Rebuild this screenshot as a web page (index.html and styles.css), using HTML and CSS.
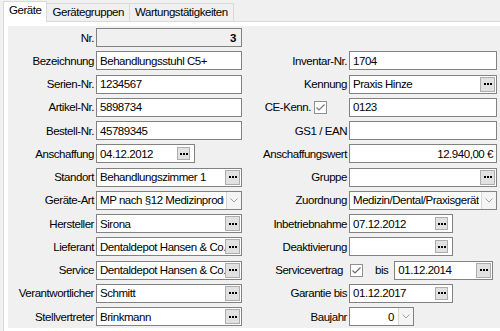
FILE: index.html
```html
<!DOCTYPE html>
<html>
  <head>
    <meta charset="utf-8" />
    <title>Geräte</title>
    <link rel="stylesheet" href="styles.css">
  </head>
  <body>
    <div class="tabs">
      <div class="tab active">Geräte</div>
      <div class="tab">Gerätegruppen</div>
      <div class="tab">Wartungstätigkeiten</div>
    </div>
    <div class="page">
      <div class="form">
        <div class="lbl">Nr.</div>
        <div class="box ro">3</div>
        <div class="blank"></div>

        <div class="lbl">Bezeichnung</div>
        <div class="box"><span class="v">Behandlungsstuhl C5+</span></div>
        <div class="lbl">Inventar-Nr.</div>
        <div class="box"><span class="v">1704</span></div>

        <div class="lbl">Serien-Nr.</div>
        <div class="box"><span class="v">1234567</span></div>
        <div class="lbl">Kennung</div>
        <div class="box"><span class="v">Praxis Hinze</span><span class="btn"><i></i><i></i><i></i></span></div>

        <div class="lbl">Artikel-Nr.</div>
        <div class="box"><span class="v">5898734</span></div>
        <div class="lbl ce">CE-Kenn.<span class="chk"><svg width="11" height="11" viewBox="0 0 11 11"><polyline points="1.5,5.5 4,8 9.5,2.5" fill="none" stroke="#7a7a7a" stroke-width="1.2"/></svg></span></div>
        <div class="box"><span class="v">0123</span></div>

        <div class="lbl">Bestell-Nr.</div>
        <div class="box"><span class="v">45789345</span></div>
        <div class="lbl">GS1 / EAN</div>
        <div class="box"><span class="v"></span></div>

        <div class="lbl">Anschaffung</div>
        <div class="cell"><div class="box date-l date"><span class="v">04.12.2012</span><span class="btn"><i></i><i></i><i></i></span></div></div>
        <div class="lbl">Anschaffungswert</div>
        <div class="box num"><span class="v">12.940,00 €</span></div>

        <div class="lbl">Standort</div>
        <div class="box"><span class="v">Behandlungszimmer 1</span><span class="btn"><i></i><i></i><i></i></span></div>
        <div class="lbl">Gruppe</div>
        <div class="box"><span class="v"></span><span class="btn"><i></i><i></i><i></i></span></div>

        <div class="lbl">Geräte-Art</div>
        <div class="box sel"><span class="v">MP nach §12 Medizinprodukteverordnung</span><span class="arr"><svg width="8" height="5" viewBox="0 0 8 5"><polyline points="0.5,0.5 4,4 7.5,0.5" fill="none" stroke="#a0a0a0" stroke-width="1"/></svg></span></div>
        <div class="lbl">Zuordnung</div>
        <div class="box sel"><span class="v">Medizin/Dental/Praxisgeräte</span><span class="arr"><svg width="8" height="5" viewBox="0 0 8 5"><polyline points="0.5,0.5 4,4 7.5,0.5" fill="none" stroke="#a0a0a0" stroke-width="1"/></svg></span></div>

        <div class="lbl">Hersteller</div>
        <div class="box"><span class="v">Sirona</span><span class="btn"><i></i><i></i><i></i></span></div>
        <div class="lbl">Inbetriebnahme</div>
        <div class="cell"><div class="box date-r date"><span class="v">07.12.2012</span><span class="btn"><i></i><i></i><i></i></span></div></div>

        <div class="lbl">Lieferant</div>
        <div class="box"><span class="v">Dentaldepot Hansen &amp; Co.</span><span class="btn"><i></i><i></i><i></i></span></div>
        <div class="lbl">Deaktivierung</div>
        <div class="cell"><div class="box date-r date"><span class="v"></span><span class="btn"><i></i><i></i><i></i></span></div></div>

        <div class="lbl">Service</div>
        <div class="box"><span class="v">Dentaldepot Hansen &amp; Co.</span><span class="btn"><i></i><i></i><i></i></span></div>
        <div class="lbl sv">Servicevertrag</div>
        <div class="cell">
          <span class="chk chk-sv"><svg width="11" height="11" viewBox="0 0 11 11"><polyline points="1.5,5.5 4,8 9.5,2.5" fill="none" stroke="#6a6a6a" stroke-width="1.2"/></svg></span>
          <span class="bis">bis</span>
          <div class="box date-s"><span class="v">01.12.2014</span><span class="btn"><i></i><i></i><i></i></span></div>
        </div>

        <div class="lbl">Verantwortlicher</div>
        <div class="box"><span class="v">Schmitt</span><span class="btn"><i></i><i></i><i></i></span></div>
        <div class="lbl">Garantie bis</div>
        <div class="cell"><div class="box date-r date"><span class="v">01.12.2017</span><span class="btn"><i></i><i></i><i></i></span></div></div>

        <div class="lbl">Stellvertreter</div>
        <div class="box"><span class="v">Brinkmann</span><span class="btn"><i></i><i></i><i></i></span></div>
        <div class="lbl">Baujahr</div>
        <div class="cell"><div class="box sel spin"><span class="v">0</span><span class="arr"><svg width="8" height="5" viewBox="0 0 8 5"><polyline points="0.5,0.5 4,4 7.5,0.5" fill="none" stroke="#a0a0a0" stroke-width="1"/></svg></span></div></div>
      </div>
    </div>
  </body>
</html>
```

FILE: styles.css
```css
body {
  margin: 0;
  background: #f0f0f0;
  font-family: "Liberation Sans", Arial, sans-serif;
  font-size: 11.5px;
  letter-spacing: -0.45px;
  color: #000;
  overflow: hidden;
}
.tabs {
  display: flex;
  align-items: flex-end;
  height: 21px;
  padding-left: 3px;
  position: relative;
  z-index: 1;
}
.tab {
  height: 17px;
  line-height: 17px;
  padding: 0 5px;
  margin-left: -1px;
  border: 1px solid #d9d9d9;
  border-bottom: none;
  background: #f0f0f0;
  white-space: nowrap;
}
.tab.active {
  height: 21px;
  line-height: 16px;
  margin-left: 0;
  margin-bottom: -1px;
  padding: 0 5px 5px;
  box-sizing: border-box;
  background: #fff;
}
.page {
  margin-left: 3px;
  width: 520px;
  border: 1px solid #d9d9d9;
  background: #fff;
  padding: 4px 0 4px 4px;
}
.form {
  display: grid;
  grid-template-columns: 86px 146px 103px 148px;
  grid-auto-rows: 19px;
  column-gap: 2px;
  row-gap: 4.25px;
  padding: 2px 0 2px;
  background: #f0f0f0;
}
.blank {
  grid-column: span 2;
}
.lbl {
  display: flex;
  align-items: center;
  justify-content: flex-end;
  white-space: nowrap;
}
.lbl.ce {
  padding-right: 20px;
}
.lbl.sv {
  padding-right: 4px;
}
.cell {
  display: flex;
  align-items: center;
}
.box {
  display: flex;
  align-items: center;
  height: 19px;
  box-sizing: border-box;
  border: 1px solid #828282;
  background: #fff;
  padding-left: 3px;
  white-space: nowrap;
  overflow: hidden;
}
.box .v {
  flex: 1;
  overflow: hidden;
}
.ro {
  justify-content: flex-end;
  padding-right: 5px;
  background: #f0f0f0;
  font-weight: bold;
}
.num .v {
  text-align: right;
  padding-right: 3px;
}
.btn {
  flex: none;
  display: flex;
  align-items: center;
  justify-content: center;
  gap: 1px;
  width: 15px;
  height: 15px;
  box-sizing: border-box;
  margin-right: 1px;
  background: #e1e1e1;
  border: 1px solid #adadad;
}
.btn i {
  display: block;
  width: 2px;
  height: 2px;
  background: #000;
}
.date .btn {
  width: 13px;
  height: 13px;
  margin-right: 4px;
}
.date-l {
  width: 99px;
}
.date-r {
  width: 104px;
}
.date-s {
  width: 99px;
  margin-left: 6px;
}
.sel .arr {
  flex: none;
  display: flex;
  align-items: center;
  justify-content: center;
  width: 14px;
  height: 17px;
  margin-left: 2px;
  border-left: 1px solid #d6d6d6;
  background: #f4f4f4;
}
.spin {
  width: 65px;
}
.spin .v {
  text-align: right;
  padding-right: 2px;
}
.chk {
  display: flex;
  align-items: center;
  justify-content: center;
  width: 13px;
  height: 13px;
  box-sizing: border-box;
  margin-left: 3px;
  border: 1px solid #8f8f8f;
  background: #fff;
}
.chk-sv {
  margin-left: 1px;
}
.bis {
  margin-left: 12px;
}
```
